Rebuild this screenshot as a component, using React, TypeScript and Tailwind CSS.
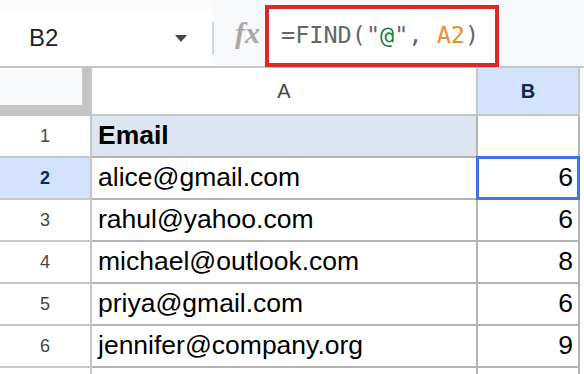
export default function App() {
  const rows = [
    { n: 1, email: 'Email', value: '', header: true },
    { n: 2, email: 'alice@gmail.com', value: '6', active: true },
    { n: 3, email: 'rahul@yahoo.com', value: '6' },
    { n: 4, email: 'michael@outlook.com', value: '8' },
    { n: 5, email: 'priya@gmail.com', value: '6' },
    { n: 6, email: 'jennifer@company.org', value: '9' },
    { n: 0, email: '', value: '' },
  ];

  return (
    <div className="w-[584px] h-[374px] overflow-hidden bg-white font-['Liberation_Sans',Arial,sans-serif]">
      {/* Name box + formula bar */}
      <div className="flex h-[66px] bg-[#f9fbfd]">
        <div className="mt-[10px] flex h-[56px] w-[212px] items-center justify-between bg-white pl-[29px] pr-[25px]">
          <span className="text-[24px] text-[#1f1f1f]">B2</span>
          <svg width="12" height="7" viewBox="0 0 12 7">
            <path d="M0 0h12L6 7z" fill="#444746" />
          </svg>
        </div>
        <div className="mt-[22px] h-[33px] w-[2px] bg-[#c9d7ee]" />
        <div className="flex flex-1 items-start bg-[#f8f9fa]">
          <span className="ml-[21px] mt-[18px] font-['Liberation_Serif',serif] text-[30px] font-bold italic leading-[30px] text-[#a8a8a8]">
            fx
          </span>
          <div className="ml-[5px] mt-[5px] flex h-[62px] w-[234px] items-center border-4 border-[#d9292b] bg-white pl-[12px] font-['DejaVu_Sans_Mono',monospace] text-[23.5px] text-[#666666]">
            <span className="whitespace-pre">
              =FIND("<span className="text-[#188038]">@</span>", <span className="text-[#e8912d]">A2</span>)
            </span>
          </div>
        </div>
      </div>

      {/* Grid */}
      <div className="border-t-2 border-[#c4c7c5]">
        <div className="flex h-[48px]">
          <div className="w-[92px] bg-[#c4c4c4]">
            <div className="h-[37px] w-[82px] bg-[#f8f9fa]" />
          </div>
          <div className="flex w-[386px] items-center justify-center border-b-2 border-r-2 border-[#c4c7c5] bg-white text-[20px] text-[#444746]">
            A
          </div>
          <div className="flex w-[102px] items-center justify-center border-b-2 border-r-2 border-[#c4c7c5] bg-[#d3e3fd] text-[20px] font-bold text-[#0b2755]">
            B
          </div>
        </div>

        {rows.map((r, i) => (
          <div key={i} className="flex h-[42px]">
            <div
              className={`flex w-[92px] items-center justify-center border-b-2 border-r-2 border-[#c4c7c5] text-[18px] ${
                r.active ? 'bg-[#d3e3fd] font-bold text-[#0b2755]' : 'bg-white text-[#444746]'
              }`}
            >
              {r.n > 0 ? r.n : ''}
            </div>
            <div
              className={`flex w-[386px] items-center border-b-2 border-r-2 border-[#b3b3b3] pl-[6px] text-[26.5px] text-black ${
                r.header ? 'bg-[#dde6f0] font-bold' : 'bg-white'
              }`}
            >
              {r.email}
            </div>
            <div className="relative flex w-[102px] items-center justify-end border-b-2 border-r-2 border-[#b3b3b3] bg-white pr-[5px] text-[26.5px] text-black">
              {r.value}
              {r.active && (
                <span className="absolute -inset-[2px] border-[3px] border-[#3b78e7]" />
              )}
            </div>
          </div>
        ))}
      </div>
    </div>
  );
}
